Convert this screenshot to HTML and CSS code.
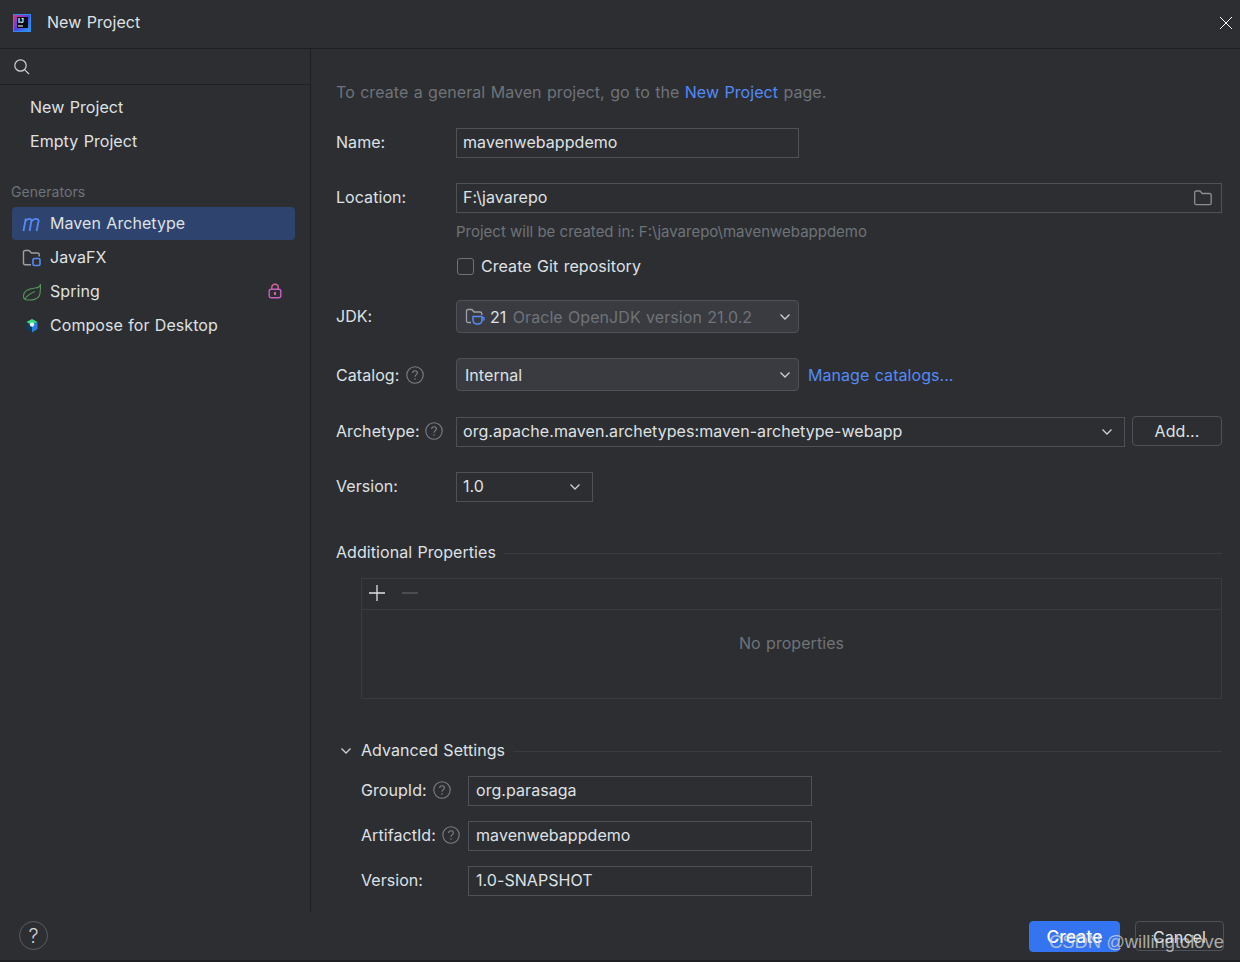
FILE: index.html
```html
<!DOCTYPE html>
<html lang="en">
<head>
    <meta charset="UTF-8">
    <title>New Project</title>
    <link rel="stylesheet" href="styles.css">
</head>
<body>
    <header class="titlebar">
        <svg class="app-logo" width="20" height="20" viewBox="0 0 20 20">
            <defs>
                <linearGradient id="logo-edge" x1="0" y1="0" x2="1" y2="1">
                    <stop offset="0" stop-color="#d8357f"/>
                    <stop offset="0.5" stop-color="#5a3fe0"/>
                    <stop offset="1" stop-color="#1f9bf5"/>
                </linearGradient>
            </defs>
            <rect x="1" y="1" width="18" height="18" fill="#2a8cf0"/>
            <rect x="2" y="2" width="16" height="16" fill="url(#logo-edge)"/>
            <rect x="5" y="4" width="11" height="11" fill="#0b0b10"/>
            <rect x="6" y="12.5" width="5" height="1" fill="#fff"/>
            <text x="6" y="10" class="logo-text">IJ</text>
        </svg>
        <span class="title">New Project</span>
        <svg class="close" width="14" height="14" viewBox="0 0 14 14">
            <path d="M1 1L13 13M13 1L1 13" stroke="#fff" stroke-width="1" fill="none"/>
        </svg>
    </header>

    <div class="main">
        <aside class="sidebar">
            <div class="search">
                <svg width="18" height="18" viewBox="0 0 18 18" fill="none" stroke="#ced0d6" stroke-width="1.2">
                    <circle cx="7.5" cy="7.5" r="5.7"/>
                    <path d="M11.8 11.8L16 16"/>
                </svg>
            </div>
            <ul class="plain-list">
                <li>New Project</li>
                <li>Empty Project</li>
            </ul>
            <div class="group-title">Generators</div>
            <ul class="gen-list">
                <li class="selected">
                    <svg width="20" height="16" viewBox="0 0 20 16" fill="none" stroke="#548af7" stroke-width="1.8">
                        <path d="M1.5 15L3.8 2.5M3.2 5.5C5 2.4 9.6 1.8 9.4 5L7.6 15M9.4 5.5C11 2.4 16.6 1.8 16.6 5L14.6 15"/>
                    </svg>
                    <span>Maven Archetype</span>
                </li>
                <li>
                    <svg width="20" height="18" viewBox="0 0 20 18" fill="none">
                        <path d="M1.5 14V3C1.5 2.2 2 1.5 3 1.5H7L9.5 4H15.5C16.6 4 17.2 4.8 17.2 5.5V7.5M9 15.8H3C2.2 15.8 1.5 15.2 1.5 14" stroke="#9da0a8" stroke-width="1.4"/>
                        <rect x="11" y="9.5" width="7" height="7" rx="1.5" stroke="#548af7" stroke-width="1.6"/>
                    </svg>
                    <span>JavaFX</span>
                </li>
                <li>
                    <svg width="20" height="18" viewBox="0 0 20 18" fill="none" stroke="#57965c" stroke-width="1.1">
                        <path d="M18.5 1C18 4 16.5 4.5 13 5C7 5.6 1.5 8 1.5 13C1.5 15 2.5 16.5 4 16.8C9 17.5 17 17 18 10.5C18.4 7 18.6 4 18.5 1Z"/>
                        <path d="M3 16C6 11.5 9 10 13 8.5"/>
                    </svg>
                    <span>Spring</span>
                    <svg class="lock" width="14" height="16" viewBox="0 0 14 16" fill="none">
                        <rect x="1.2" y="6.2" width="11.6" height="8.6" rx="2" stroke="#c75fc4" stroke-width="1.4"/>
                        <path d="M3.8 6V4.2C3.8 2.4 5.2 1.2 7 1.2C8.8 1.2 10.2 2.4 10.2 4.2V6" stroke="#d9609c" stroke-width="1.4"/>
                        <rect x="6" y="9" width="2" height="3" fill="#d9609c"/>
                    </svg>
                </li>
                <li>
                    <svg width="20" height="18" viewBox="0 0 20 18">
                        <path d="M10 2L15.5 5V12L10 15.5L4.5 12V5Z" fill="#0f3c57"/>
                        <path d="M10 2L15.5 5L10 8L4.5 5Z" fill="#3ddc84"/>
                        <path d="M15.5 5V12L10 15.5V8Z" fill="#2b7de0"/>
                        <circle cx="10" cy="7.6" r="2.2" fill="#e8f3f8"/>
                    </svg>
                    <span>Compose for Desktop</span>
                </li>
            </ul>
        </aside>

        <section class="content">
            <p class="intro">To create a general Maven project, go to the <a class="link">New Project</a> page.</p>

            <div class="row row-name">
                <label>Name:</label>
                <div class="field w-short">mavenwebappdemo</div>
            </div>

            <div class="row row-location">
                <label>Location:</label>
                <div class="field grow">
                    F:\javarepo
                    <svg class="field-icon" width="20" height="18" viewBox="0 0 20 18" fill="none" stroke="#8a8d94" stroke-width="1.3">
                        <path d="M1.7 14V3.5C1.7 2.6 2.3 2 3.2 2H7L9.2 4.5H16.6C17.6 4.5 18.2 5.1 18.2 6V14C18.2 15 17.6 15.6 16.6 15.6H3.2C2.3 15.6 1.7 15 1.7 14Z"/>
                    </svg>
                </div>
            </div>
            <p class="path-hint">Project will be created in: F:\javarepo\mavenwebappdemo</p>
            <div class="check-row">
                <span class="checkbox"></span>
                Create Git repository
            </div>

            <div class="row row-jdk">
                <label>JDK:</label>
                <div class="combo w-short">
                    <svg class="jdk-icon" width="20" height="20" viewBox="0 0 20 20" fill="none">
                        <path d="M1.5 14V4C1.5 3 2 2.5 3 2.5H7L9 5H15C16.2 5 16.8 5.6 16.8 6.6V8M1.5 14C1.5 15 2 15.5 3 15.5H6" stroke="#9da0a8" stroke-width="1.3"/>
                        <path d="M8 9.5H17V13C17 15.5 15.5 17 12.5 17C9.5 17 8 15.5 8 13Z" stroke="#548af7" stroke-width="1.5"/>
                        <path d="M17 10.5H19V13H17" stroke="#548af7" stroke-width="1.2"/>
                    </svg>
                    <span>21</span>&nbsp;<span class="muted">Oracle OpenJDK version 21.0.2</span>
                    <svg class="chevron" width="12" height="8" viewBox="0 0 12 8"><path d="M1.5 1.5L6 6L10.5 1.5"/></svg>
                </div>
            </div>

            <div class="row row-catalog">
                <label>Catalog:
                    <svg class="help" width="18" height="18" viewBox="0 0 18 18"><circle cx="9" cy="9" r="8.2"/><path d="M6.6 7C6.7 5.6 7.7 4.8 9 4.8C10.4 4.8 11.4 5.7 11.4 6.9C11.4 8.6 9 8.7 9 10.8"/><circle class="dot" cx="9" cy="13" r="0.8"/></svg>
                </label>
                <div class="combo w-short">
                    Internal
                    <svg class="chevron" width="12" height="8" viewBox="0 0 12 8"><path d="M1.5 1.5L6 6L10.5 1.5"/></svg>
                </div>
                <a class="link manage">Manage catalogs...</a>
            </div>

            <div class="row row-archetype">
                <label>Archetype:
                    <svg class="help" width="18" height="18" viewBox="0 0 18 18"><circle cx="9" cy="9" r="8.2"/><path d="M6.6 7C6.7 5.6 7.7 4.8 9 4.8C10.4 4.8 11.4 5.7 11.4 6.9C11.4 8.6 9 8.7 9 10.8"/><circle class="dot" cx="9" cy="13" r="0.8"/></svg>
                </label>
                <div class="field grow">
                    org.apache.maven.archetypes:maven-archetype-webapp
                    <svg class="chevron field-chevron" width="12" height="8" viewBox="0 0 12 8"><path d="M1.5 1.5L6 6L10.5 1.5"/></svg>
                </div>
                <button class="btn add">Add...</button>
            </div>

            <div class="row row-version">
                <label>Version:</label>
                <div class="field w-tiny">
                    1.0
                    <svg class="chevron field-chevron" width="12" height="8" viewBox="0 0 12 8"><path d="M1.5 1.5L6 6L10.5 1.5"/></svg>
                </div>
            </div>

            <div class="section-title additional"><span>Additional Properties</span><i></i></div>
            <div class="props">
                <div class="props-bar">
                    <svg width="18" height="18" viewBox="0 0 18 18"><path d="M9 1V17M1 9H17" stroke="#dfe1e5" stroke-width="1.3"/></svg>
                    <svg width="18" height="18" viewBox="0 0 18 18"><path d="M1 9H17" stroke="#5a5d63" stroke-width="1.3"/></svg>
                </div>
                <div class="props-empty">No properties</div>
            </div>

            <div class="section-title advanced">
                <svg class="adv-chevron" width="12" height="8" viewBox="0 0 12 8"><path d="M1.5 1.5L6 6L10.5 1.5"/></svg>
                <span>Advanced Settings</span><i></i>
            </div>
            <div class="adv-row first">
                <label>GroupId:
                    <svg class="help" width="18" height="18" viewBox="0 0 18 18"><circle cx="9" cy="9" r="8.2"/><path d="M6.6 7C6.7 5.6 7.7 4.8 9 4.8C10.4 4.8 11.4 5.7 11.4 6.9C11.4 8.6 9 8.7 9 10.8"/><circle class="dot" cx="9" cy="13" r="0.8"/></svg>
                </label>
                <div class="field adv-field">org.parasaga</div>
            </div>
            <div class="adv-row">
                <label>ArtifactId:
                    <svg class="help" width="18" height="18" viewBox="0 0 18 18"><circle cx="9" cy="9" r="8.2"/><path d="M6.6 7C6.7 5.6 7.7 4.8 9 4.8C10.4 4.8 11.4 5.7 11.4 6.9C11.4 8.6 9 8.7 9 10.8"/><circle class="dot" cx="9" cy="13" r="0.8"/></svg>
                </label>
                <div class="field adv-field">mavenwebappdemo</div>
            </div>
            <div class="adv-row">
                <label>Version:</label>
                <div class="field adv-field">1.0-SNAPSHOT</div>
            </div>
        </section>
    </div>

    <footer class="footer">
        <button class="help-btn">?</button>
        <div class="actions">
            <button class="btn primary">Create</button>
            <button class="btn cancel">Cancel</button>
        </div>
    </footer>

    <div class="watermark">CSDN @willingtolove</div>
</body>
</html>
```

FILE: styles.css
```css
html, body {
    margin: 0;
    padding: 0;
}

body {
    width: 1240px;
    height: 962px;
    overflow: hidden;
    position: relative;
    display: flex;
    flex-direction: column;
    background: #2c2e31;
    color: #dfe1e5;
    font-family: Inter, "Noto Sans", sans-serif;
    font-size: 16px;
    line-height: 20px;
    letter-spacing: 0.06px;
    word-spacing: 0.8px;
}

.titlebar {
    height: 48px;
    flex: none;
    display: flex;
    align-items: center;
    padding: 0 6px 0 12px;
    border-bottom: 1px solid #1e1f22;
}

.app-logo {
    margin-right: 15px;
    margin-top: -3px;
}

.logo-text {
    font-family: "Liberation Sans", sans-serif;
    font-size: 7px;
    font-weight: bold;
    fill: #fff;
}

.title {
    flex: 1;
    margin-top: -5px;
}

.close {
    margin-top: -3px;
    margin-right: 1px;
}

.main {
    height: 863px;
    flex: none;
    display: flex;
}

.sidebar {
    flex: none;
    box-sizing: border-box;
    width: 311px;
    border-right: 1px solid #1e1f22;
}

.search {
    height: 35px;
    display: flex;
    align-items: center;
    padding-left: 13px;
    border-bottom: 1px solid #1e1f22;
}

.plain-list, .gen-list {
    list-style: none;
    margin: 0;
    padding: 0;
}

.plain-list {
    padding: 5px 0 0 30px;
}

.plain-list li {
    height: 34px;
    line-height: 34px;
}

.group-title {
    margin: 24px 0 0 11px;
    font-size: 14px;
    color: #6f737a;
}

.gen-list {
    margin-top: 5px;
    width: 283px;
    margin-left: 12px;
}

.gen-list li {
    height: 34px;
    display: flex;
    align-items: center;
    gap: 8px;
    padding-left: 10px;
    border-radius: 4px;
    box-sizing: border-box;
}

.gen-list li span {
    padding-bottom: 2px;
}

.gen-list li.selected {
    height: 33px;
    margin-bottom: 1px;
    background: #2e436e;
}

.lock {
    margin-left: auto;
    margin-right: 13px;
    margin-top: -2px;
}

.content {
    flex: 1;
    padding: 33px 18px 0 25px;
}

.intro {
    margin: 0;
    color: #6f737a;
}

.link {
    color: #548af7;
}

.row {
    display: flex;
    align-items: center;
}

.row label, .adv-row label {
    display: flex;
    align-items: center;
    gap: 6px;
    flex: none;
    padding-bottom: 2px;
}

.row label {
    width: 120px;
}

.adv-row label {
    width: 107px;
}

.field, .combo {
    box-sizing: border-box;
    display: flex;
    align-items: center;
    flex: none;
    position: relative;
}

.field {
    height: 30px;
    padding: 0 6px 2px;
    border: 1px solid #4e5157;
}

.combo {
    padding: 0 7px 0 8px;
    background: #393b40;
    border: 1px solid #4e5157;
    border-radius: 4px;
}

.w-short {
    width: 343px;
}

.w-tiny {
    width: 137px;
}

.grow {
    flex: 1;
}

.row-name {
    margin-top: 26px;
}

.row-location {
    margin-top: 25px;
}

.field-icon {
    margin-left: auto;
    margin-right: 2px;
    margin-top: 2px;
}

.chevron {
    margin-left: auto;
    fill: none;
    stroke: #ced0d6;
    stroke-width: 1.3;
}

.field-chevron {
    margin-right: 5px;
    margin-top: 2px;
}

.path-hint {
    margin: 9px 0 0 120px;
    font-size: 15px;
    letter-spacing: 0;
    word-spacing: 0;
    color: #6f737a;
}

.check-row {
    margin: 14px 0 0 121px;
    display: flex;
    align-items: center;
    gap: 7px;
    height: 20px;
}

.checkbox {
    box-sizing: border-box;
    width: 17px;
    height: 17px;
    border: 1px solid #6f737a;
    border-radius: 3px;
}

.row-jdk {
    margin-top: 24px;
}

.row-jdk .combo, .row-catalog .combo {
    height: 33px;
}

.jdk-icon {
    margin: 0 5px 0 0;
}

.muted {
    color: #6f737a;
    margin-left: 1px;
}

.row-jdk label, .row-catalog label {
    padding-bottom: 0;
}

.row-jdk label {
    margin-top: -2px;
}

.row-catalog {
    margin-top: 25px;
}

.row-catalog .help {
    margin-left: 1px;
}

.help {
    fill: none;
    stroke: #7d8087;
    stroke-width: 1.1;
}

.help .dot {
    fill: #7d8087;
    stroke: none;
}

.manage {
    margin-left: 9px;
}

.row-archetype {
    margin-top: 26px;
}

.row-archetype .help {
    margin-left: -1px;
}

.add {
    margin-left: 7px;
    width: 90px;
    margin-top: -2px;
}

.btn {
    box-sizing: border-box;
    height: 30px;
    border: 1px solid #4e5157;
    border-radius: 4px;
    background: transparent;
    color: #dfe1e5;
    font: inherit;
    letter-spacing: inherit;
    padding: 0;
}

.row-version {
    margin-top: 25px;
}

.section-title {
    display: flex;
    align-items: center;
}

.section-title span {
    padding-bottom: 2px;
}

.section-title i {
    flex: 1;
    height: 1px;
    background: #393b40;
    margin-left: 8px;
}

.additional {
    margin-top: 40px;
}

.props {
    margin: 14px 0 0 25px;
    height: 121px;
    box-sizing: border-box;
    border: 1px solid #393b40;
    display: flex;
    flex-direction: column;
}

.props-bar {
    height: 31px;
    flex: none;
    box-sizing: border-box;
    display: flex;
    align-items: center;
    gap: 15px;
    padding: 0 0 2px 6px;
    border-bottom: 1px solid #393b40;
}

.props-empty {
    flex: 1;
    display: flex;
    align-items: center;
    justify-content: center;
    color: #6f737a;
    padding-bottom: 22px;
}

.advanced {
    margin-top: 41px;
}

.adv-chevron {
    margin: 0 9px 0 4px;
    fill: none;
    stroke: #ced0d6;
    stroke-width: 1.3;
}

.adv-row {
    display: flex;
    align-items: center;
    margin: 15px 0 0 25px;
}

.adv-row.first {
    margin-top: 14px;
}

.adv-field {
    width: 344px;
    padding-left: 7px;
}

.footer {
    flex: 1;
    position: relative;
    display: flex;
    align-items: center;
    justify-content: space-between;
    padding: 0 16px 0 19px;
    border-bottom: 2px solid #1e1f22;
}

.help-btn {
    box-sizing: border-box;
    width: 29px;
    height: 29px;
    margin-top: -1px;
    border-radius: 50%;
    border: 1px solid #5a5d63;
    background: transparent;
    color: #ced0d6;
    font: inherit;
    font-size: 20px;
    font-weight: 300;
    padding: 0;
}

.actions {
    display: flex;
    align-items: center;
    gap: 15px;
}

.primary {
    width: 91px;
    height: 31px;
    padding-top: 1px;
    background: #3574f0;
    border-color: #3574f0;
    color: #fff;
    font-size: 17.5px;
    font-weight: 500;
}

.cancel {
    width: 89px;
    padding-top: 2px;
}

.watermark {
    position: absolute;
    right: 16px;
    bottom: 10px;
    font-family: "Liberation Sans", sans-serif;
    font-size: 18.4px;
    letter-spacing: 0;
    word-spacing: 0;
    color: rgba(220, 220, 220, 0.72);
}
```
